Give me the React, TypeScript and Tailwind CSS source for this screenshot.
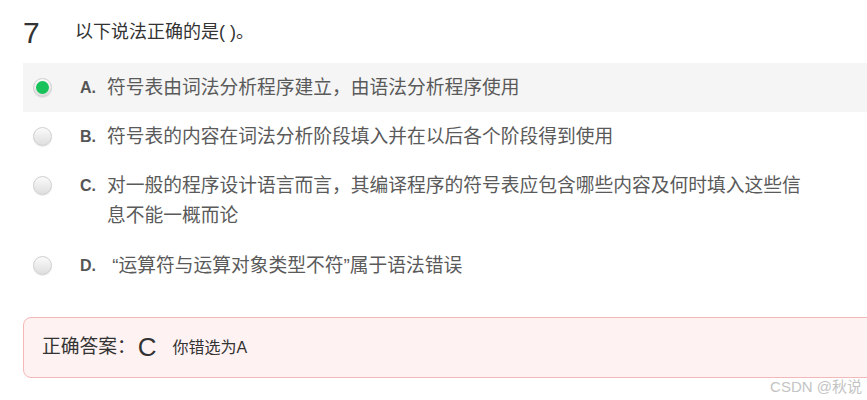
import React from 'react';

const FONT = '"Liberation Sans", "Noto Sans CJK SC", sans-serif';

interface OptionProps {
    label: string;
    text: string;
    selected?: boolean;
}

const Radio: React.FC<{ selected?: boolean }> = ({ selected }) => (
    <div className="w-[19px] h-[19px] rounded-full border border-[#cfcfcf] bg-gradient-to-b from-[#fbfbfb] to-[#dedede] flex items-center justify-center shadow-[0_1px_1px_rgba(0,0,0,0.08)]">
        {selected && <div className="w-[13px] h-[13px] rounded-full bg-[#17c25a]"></div>}
    </div>
);

const Option: React.FC<OptionProps> = ({ label, text, selected }) => (
    <div className={`flex items-start pl-[10px] py-[9.5px] ${selected ? 'bg-[#f5f5f5]' : ''}`}>
        <div className="h-[30px] flex items-center">
            <Radio selected={selected} />
        </div>
        <div className="h-[30px] flex items-center ml-[28px] w-[27px] text-[16px] font-bold text-[#555]">{label}</div>
        <div className="w-[710px] text-[18.75px] leading-[30px] text-[#5a5a5a]">{text}</div>
    </div>
);

export default function App() {
    return (
        <div className="relative w-[867px] h-[400px] bg-white overflow-hidden" style={{ fontFamily: FONT }}>
            <div className="pl-[23px] pt-[8px]">
                <div className="flex items-center h-[48px]">
                    <div className="w-[52px] text-[30px] text-[#333]">7</div>
                    <div className="text-[18px] text-[#333]">以下说法正确的是( )。</div>
                </div>

                <div className="mt-[7px]">
                    <Option label="A." text="符号表由词法分析程序建立，由语法分析程序使用" selected />
                    <Option label="B." text="符号表的内容在词法分析阶段填入并在以后各个阶段得到使用" />
                    <div className="pb-[1px]">
                        <Option label="C." text="对一般的程序设计语言而言，其编译程序的符号表应包含哪些内容及何时填入这些信息不能一概而论" />
                    </div>
                    <Option label="D." text={'\u00a0“运算符与运算对象类型不符”属于语法错误'} />
                </div>

                <div className="mt-[27px] mr-[-12px] h-[61px] rounded-[8px] border border-[#f5b8b8] bg-[#fff2f2] flex items-center pl-[18px]">
                    <span className="text-[18.75px] text-[#333]">正确答案：</span>
                    <span className="ml-[2px] text-[26px] text-[#333]">C</span>
                    <span className="ml-[16px] text-[16px] text-[#333]">你错选为A</span>
                </div>
            </div>

            <div className="absolute right-[5px] bottom-[2px] text-[15px] text-[#c4c4c4]">CSDN @秋说</div>
        </div>
    );
}
